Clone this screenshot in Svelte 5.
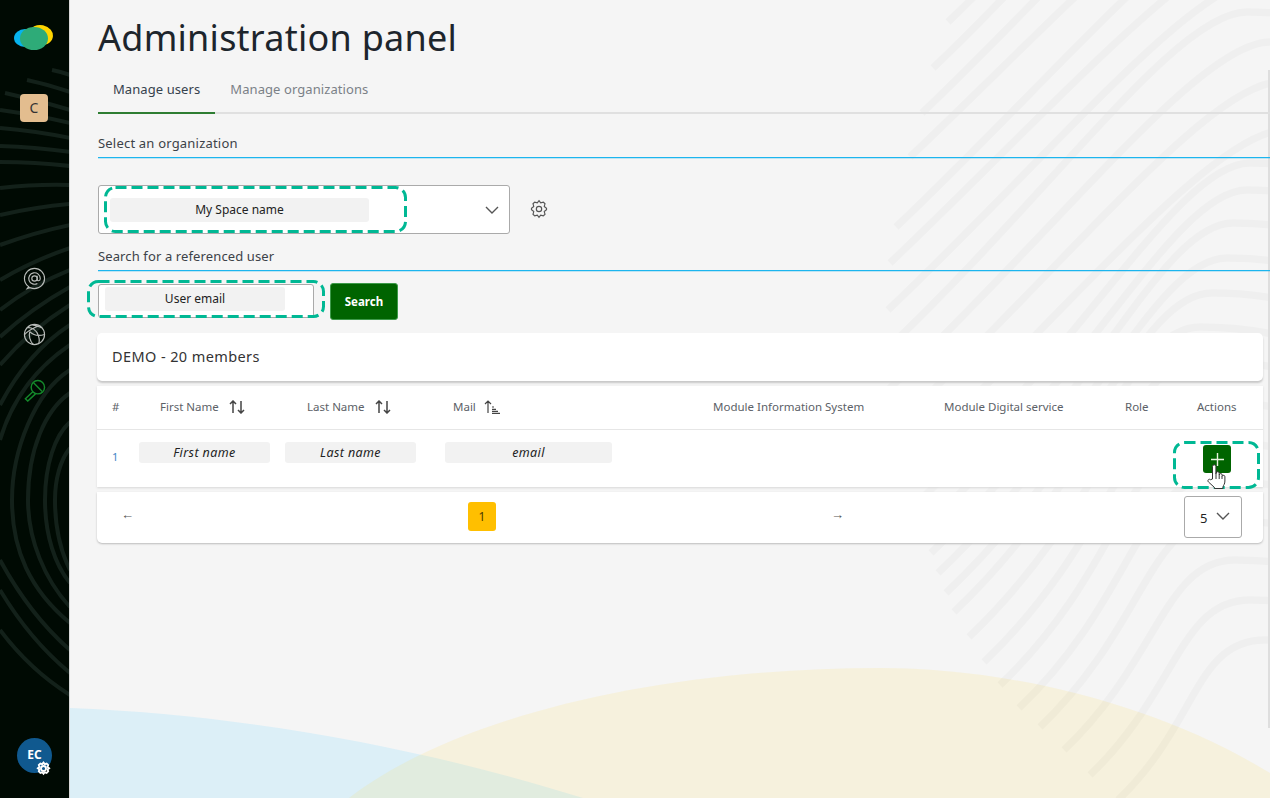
<script>
  const headers = [
    { label: "#", w: 48 },
    { label: "First Name", w: 147, sort: "both" },
    { label: "Last Name", w: 146, sort: "both" },
    { label: "Mail", w: 260, sort: "asc" },
    { label: "Module Information System", w: 231 },
    { label: "Module Digital service", w: 181 },
    { label: "Role", w: 72 },
    { label: "Actions" },
  ];

  // fingerprint ridges behind the page: [end x, end y, peak x, peak y]
  const ridges = [
    [948, 22, 1270, -300], [933, 68, 1270, -240], [922, 113, 1270, -190],
    [910, 157, 1270, -140], [896, 227, 1270, -100], [890, 263, 1270, -60],
    [888, 310, 1265, -22], [886, 350, 1247, 12], [888, 390, 1270, 42],
    [892, 430, 1280, 82], [900, 470, 1285, 130], [910, 510, 1250, 163],
    [920, 533, 1247, 190], [931, 553, 1233, 223], [938, 573, 1227, 258],
    [946, 593, 1212, 293], [954, 612, 1200, 327], [969, 637, 1200, 360],
    [984, 662, 1200, 400], [1000, 685, 1200, 440], [1019, 708, 1210, 480],
    [1040, 727, 1220, 520], [1064, 750, 1235, 560], [1090, 775, 1250, 600],
    [1118, 800, 1265, 640],
  ].map(([ex, ey, px, py]) => {
    const t = (ey - py) * 0.5;
    return `M${ex} ${ey}C${ex + t} ${ey - 0.95 * t} ${px - 70} ${py} ${px} ${py}C${px + 80} ${py} ${px + 150} ${py + 25} ${px + 200} ${py + 60}`;
  });

  const sideLines = [
    "M52 70Q62 72 70 75", "M27 80Q50 85 70 92", "M5 93Q38 100 70 110",
    "M0 110Q36 115 70 123", "M0 128Q36 131 70 138", "M0 146Q36 147 70 152",
    "M0 162Q36 162 70 166", "M0 188Q36 184 70 185", "M0 215Q36 207 70 204",
    "M0 245Q36 232 70 225", "M0 280Q34 260 70 248", "M0 310Q32 285 70 270",
    "M0 337Q32 308 70 287", "M0 365Q30 330 70 305", "M0 405Q28 352 70 325",
    "M0 440Q18 380 70 345",
    "M70 370C35 392 12 450 12 500C12 550 30 590 70 623",
    "M70 393C45 410 28 450 28 500C28 540 45 580 70 607",
    "M70 422C55 435 45 465 45 500C45 535 55 565 70 583",
    "M70 448C60 460 55 480 55 500C55 525 60 550 70 570",
    "M0 560Q30 615 70 650", "M0 590Q30 640 70 673", "M0 630Q30 670 70 695",
  ];
</script>

<div class="page">
  <aside class="sidebar">
    <svg class="side-bg" viewBox="0 0 69 798" aria-hidden="true">
      {#each sideLines as d}
        <path {d} />
      {/each}
    </svg>

    <svg class="logo" viewBox="0 0 40 28" aria-hidden="true">
      <ellipse cx="11" cy="15" rx="11" ry="9" fill="#06b3ee" />
      <ellipse cx="27" cy="12" rx="12" ry="10" fill="#ffd500" transform="rotate(12 27 12)" />
      <ellipse cx="20" cy="15.5" rx="14" ry="11.5" fill="#2eab78" />
    </svg>

    <div class="badge">C</div>

    <nav class="side-icons">
      <svg viewBox="0 0 24 24" aria-hidden="true">
        <path d="M6 20.500C3 18.500 1.500 15.500 1.500 12A10.500 10.500 0 1 1 12 22.500C10 22.500 8.500 22 7 21.500L4.500 22.500Z" />
        <circle cx="12" cy="12" r="2.800" />
        <path d="M14.800 9V13C14.800 15 18 15 18 12A6 6 0 1 0 15 17.200" />
      </svg>
      <svg viewBox="0 0 24 24" aria-hidden="true">
        <circle cx="12" cy="12" r="10.500" />
        <path d="M4 5C9 4 14 7 16 13S17 20 16 22M2 12C5 8 10 6 16 3M7 9C6 13 7 19 11 22.500M7 9C11 13 16 14 22.500 12M20 5C17 4 14 2.500 10 2" />
      </svg>
      <svg class="key" viewBox="0 0 24 24" aria-hidden="true">
        <circle cx="15.500" cy="8.500" r="7" />
        <path d="M11 4L20 13M10.500 13L2.500 20.500L5 23L13 15.500" />
      </svg>
    </nav>

    <div class="avatar">
      EC
      <svg class="avatar-gear" viewBox="0 0 24 24" aria-hidden="true">
        <circle cx="12" cy="12" r="4" />
        <path d="M12 2.500l2 2.500 3-1 2.500 2.500-1 3 2.500 2-2.500 2 1 3-2.500 2.500-3-1-2 2.500-2-2.500-3 1-2.500-2.500 1-3-2.500-2 2.500-2-1-3L7 4l3 1z" />
      </svg>
    </div>
  </aside>

  <main class="main">
    <svg class="main-bg" viewBox="70 0 1200 798" aria-hidden="true">
      <path class="blue" d="M70 798V708C250 715 430 750 583 798Z" />
      <path class="yellow" d="M349 798C450 720 650 668 881 668C1000 668 1150 700 1270 773V798Z" />
      {#each ridges as d}
        <path class="ridge" {d} />
      {/each}
    </svg>
    <div class="scrollbar"></div>

    <div class="content">
      <h1>Administration panel</h1>

      <div class="tabs">
        <span class="tab active">Manage users</span>
        <span class="tab">Manage organizations</span>
      </div>

      <h2 class="section first">Select an organization</h2>

      <div class="org-row">
        <div class="select">
          <span class="ph org-ph">My Space name</span>
          <svg class="dash org-dash" aria-hidden="true"><rect x="1.500" y="1.500" rx="10" /></svg>
          <svg class="chevron" viewBox="0 0 14 8" aria-hidden="true"><path d="M1 1l6 6 6-6" /></svg>
        </div>
        <svg class="gear" viewBox="0 0 24 24" aria-hidden="true">
          <circle cx="12" cy="12" r="3.200" />
          <path d="M12 2l2 2.600 3.200-.9 2 2-.9 3.200L21 11v2l-2.700 2.100.9 3.200-2 2-3.200-.9L12 22l-2-2.600-3.200.9-2-2 .9-3.200L3 13v-2l2.700-2.100-.9-3.200 2-2 3.200.9z" />
        </svg>
      </div>

      <h2 class="section second">Search for a referenced user</h2>

      <div class="search-row">
        <div class="input">
          <span class="ph email-ph">User email</span>
          <svg class="dash email-dash" aria-hidden="true"><rect x="1.500" y="1.500" rx="10" /></svg>
        </div>
        <button class="search">Search</button>
      </div>

      <section class="card title-card">DEMO - 20 members</section>

      <section class="card table-card">
        <div class="thead">
          {#each headers as h}
            <div class="th" style={h.w ? `width:${h.w}px` : ""}>
              {h.label}
              {#if h.sort === "both"}
                <svg class="sort" viewBox="0 0 16 14" aria-hidden="true"><path d="M4 13V1M1 4l3-3 3 3M12 1v12M9 10l3 3 3-3" /></svg>
              {:else if h.sort === "asc"}
                <svg class="sort mail-sort" viewBox="0 0 16 14" aria-hidden="true"><path d="M4 13V1M1 4l3-3 3 3M8 7h2M8 9.300h4M8 11.300h6M8 13.300h8" /></svg>
              {/if}
            </div>
          {/each}
        </div>
        <div class="tr">
          <span class="num">1</span>
          <span class="ph cell first-cell">First name</span>
          <span class="ph cell last-cell">Last name</span>
          <span class="ph cell mail-cell">email</span>
          <div class="action">
            <button class="add" aria-label="Add">
              <svg viewBox="0 0 14 14" aria-hidden="true"><path d="M7 0v14M0 7h14" /></svg>
            </button>
            <svg class="dash add-dash" aria-hidden="true"><rect x="1.500" y="1.500" rx="10" /></svg>
            <svg class="hand" viewBox="0 0 20 27" aria-hidden="true">
              <path d="M6.500 16V3.500a1.700 1.700 0 0 1 3.400 0V11l.3-1a1.500 1.500 0 0 1 3 .4V12a1.500 1.500 0 0 1 3 .2v1a1.400 1.400 0 0 1 2.700.5v4.300c0 3-1.300 4-2 6v1.500H8.500V24.500L2.500 19c-1.500-1.500.3-3.700 2-2.300z" />
              <path d="M10 11v5M13.200 12v4M16 13v3" />
            </svg>
          </div>
        </div>
      </section>

      <section class="card pager">
        <span class="arrow prev">←</span>
        <span class="page-num">1</span>
        <span class="arrow next">→</span>
        <div class="per-page">
          5
          <svg viewBox="0 0 14 8" aria-hidden="true"><path d="M1 1l6 6 6-6" /></svg>
        </div>
      </section>
    </div>
  </main>
</div>

<style>
  :global(body) {
    margin: 0;
  }

  .page {
    display: flex;
    width: 1270px;
    height: 798px;
    overflow: hidden;
    font-family: "Noto Sans", sans-serif;
    color: #2b333b;
    background: #f5f5f5;
  }

  .sidebar {
    position: relative;
    flex: 0 0 69px;
    display: flex;
    flex-direction: column;
    align-items: center;
    background: #000a03;
    border-right: 1px solid #d8d8d8;
  }

  .side-bg {
    position: absolute;
    left: 0;
    top: 0;
    width: 69px;
    height: 798px;
    fill: none;
    stroke: #13211a;
    stroke-width: 4;
  }

  .logo {
    position: relative;
    width: 40px;
    height: 28px;
    margin: 23px 2px 0 0;
  }

  .badge {
    position: relative;
    width: 28px;
    height: 28px;
    margin: 43px 1px 0 0;
    border-radius: 4px;
    background: #e3bd8f;
    color: #333;
    font-size: 14px;
    line-height: 28px;
    text-align: center;
  }

  .side-icons {
    position: relative;
    display: flex;
    flex-direction: column;
    gap: 33px;
    margin-top: 145px;
  }

  .side-icons svg {
    display: block;
    width: 23px;
    height: 23px;
    fill: none;
    stroke: #b9bdba;
    stroke-width: 1.200;
  }

  .side-icons .key {
    stroke: #14882b;
    stroke-width: 1.500;
  }

  .avatar {
    position: relative;
    width: 35px;
    height: 35px;
    margin-top: auto;
    margin-bottom: 25px;
    border-radius: 50%;
    background: #10598f;
    color: #fff;
    font-size: 12px;
    font-weight: 700;
    line-height: 33px;
    text-align: center;
  }

  .avatar-gear {
    position: absolute;
    right: 1px;
    bottom: -3px;
    width: 15px;
    height: 15px;
    fill: none;
    stroke: #fff;
    stroke-width: 3;
  }

  .main {
    position: relative;
    flex: 1;
    min-width: 0;
  }

  .main-bg {
    position: absolute;
    left: 0;
    top: 0;
    width: 1200px;
    height: 798px;
  }

  .blue {
    fill: #dceff7;
  }

  .yellow {
    fill: rgba(252, 222, 78, 0.14);
  }

  .ridge {
    fill: none;
    stroke: rgba(0, 0, 0, 0.025);
    stroke-width: 7.500;
  }

  .scrollbar {
    position: absolute;
    right: 0;
    top: 70px;
    width: 2px;
    height: 658px;
    background: #dedede;
  }

  .content {
    position: relative;
    padding-left: 28px;
  }

  h1 {
    margin: 0;
    padding-top: 13px;
    font-size: 36px;
    font-weight: 400;
    line-height: 50px;
    color: #1d252c;
    letter-spacing: 0.25px;
  }

  .tabs {
    display: flex;
    height: 37px;
    margin-top: 12px;
    border-bottom: 2px solid #e0e0e0;
  }

  .tab {
    padding: 5px 15px 0;
    font-size: 13px;
    line-height: 18px;
    letter-spacing: 0.08px;
    color: #7b8187;
  }

  .tab.active {
    margin-bottom: -2px;
    border-bottom: 2px solid #2e7d32;
    color: #36424d;
  }

  .section {
    margin: 0;
    padding-bottom: 5px;
    border-bottom: 1px solid #1cb5ee;
    box-shadow: 0 1px 0 rgba(31, 180, 234, 0.25);
    font-size: 13px;
    font-weight: 400;
    line-height: 18px;
    color: #3c4248;
  }

  .section.first {
    margin-top: 20px;
    letter-spacing: 0.2px;
  }

  .section.second {
    letter-spacing: 0.12px;
  }

  .org-row {
    display: flex;
    align-items: center;
    gap: 19px;
    margin: 27px 0 13px;
  }

  .select {
    position: relative;
    box-sizing: border-box;
    width: 412px;
    height: 49px;
    border: 1px solid #aaa;
    border-radius: 3px;
    background: #fff;
  }

  .ph {
    display: block;
    border-radius: 3px;
    background: #f2f2f2;
    color: #222;
    font-size: 12px;
    text-align: center;
  }

  .org-ph {
    position: absolute;
    left: 11px;
    top: 12px;
    width: 259px;
    line-height: 24px;
  }

  .dash {
    position: absolute;
    pointer-events: none;
  }

  .dash rect {
    width: calc(100% - 3px);
    height: calc(100% - 3px);
    fill: none;
    stroke: #00b894;
    stroke-width: 3;
    stroke-dasharray: 11 5;
  }

  .org-dash {
    left: 5px;
    top: 0;
    width: 303px;
    height: 47px;
  }

  .chevron {
    position: absolute;
    right: 10px;
    top: 20px;
    width: 14px;
    height: 8px;
    fill: none;
    stroke: #555;
    stroke-width: 1.400;
  }

  .gear {
    width: 20px;
    height: 20px;
    margin-top: -2px;
    fill: none;
    stroke: #555;
    stroke-width: 1.400;
  }

  .search-row {
    display: flex;
    align-items: flex-start;
    gap: 16px;
    margin-top: 12px;
  }

  .input {
    position: relative;
    box-sizing: border-box;
    width: 216px;
    height: 34px;
    margin-top: 1px;
    border: 1px solid #aaa;
    border-radius: 3px;
    background: #fff;
  }

  .email-ph {
    position: absolute;
    left: 6px;
    top: 2px;
    width: 180px;
    line-height: 24px;
  }

  .email-dash {
    left: -12px;
    top: -5px;
    width: 238px;
    height: 38px;
  }

  .search {
    width: 68px;
    height: 37px;
    padding: 0;
    border: 1px solid #3d9a4a;
    border-radius: 3px;
    background: #006400;
    color: #fff;
    font-family: inherit;
    font-size: 11.500px;
    font-weight: 700;
  }

  .card {
    width: 1166px;
    margin-left: -1px;
    border-radius: 5px;
    background: #fff;
  }

  .title-card {
    box-sizing: border-box;
    height: 48px;
    margin-top: 13px;
    padding: 13px 15px;
    box-shadow: 0 2px 2px #c8c8c8;
    font-size: 14.500px;
    line-height: 20px;
    letter-spacing: 0.4px;
    color: #333;
  }

  .table-card {
    height: 101px;
    margin-top: 5px;
    box-shadow: 0 1px 2px #d8d8d8;
    border-radius: 0;
  }

  .thead {
    display: flex;
    align-items: center;
    box-sizing: border-box;
    height: 44px;
    padding: 0 0 2px 15px;
    border-bottom: 1px solid #e6e6e6;
  }

  .th {
    display: flex;
    align-items: center;
    gap: 10px;
    font-size: 11.500px;
    color: #5c6167;
    white-space: nowrap;
  }

  .sort {
    width: 16px;
    height: 14px;
    fill: none;
    stroke: #444;
    stroke-width: 1.500;
  }

  .mail-sort {
    margin-left: -2px;
    stroke-width: 1.200;
  }

  .tr {
    display: flex;
    align-items: flex-start;
    padding: 12px 0 0 15px;
  }

  .num {
    width: 27px;
    padding-top: 7px;
    font-size: 11px;
    line-height: 16px;
    color: #3f86c6;
  }

  .cell {
    height: 21px;
    font-size: 12.500px;
    font-style: italic;
    line-height: 21px;
    letter-spacing: 0.4px;
  }

  .first-cell,
  .last-cell {
    width: 131px;
    margin-right: 15px;
  }

  .last-cell {
    margin-right: 29px;
  }

  .mail-cell {
    width: 167px;
  }

  .action {
    position: relative;
    margin-left: 591px;
    margin-top: 3px;
  }

  .add {
    display: flex;
    align-items: center;
    justify-content: center;
    width: 28px;
    height: 28px;
    padding: 0;
    border: 0;
    border-radius: 3px;
    background: #006400;
  }

  .add svg {
    width: 13px;
    height: 13px;
    fill: none;
    stroke: #e8f3e0;
    stroke-width: 1.500;
  }

  .add-dash {
    left: -30px;
    top: -4px;
    width: 87px;
    height: 48px;
  }

  .hand {
    position: absolute;
    left: 3px;
    top: 18px;
    width: 20px;
    height: 27px;
    fill: #fff;
    stroke: #333;
    stroke-width: 1;
  }

  .pager {
    display: flex;
    align-items: center;
    box-sizing: border-box;
    position: relative;
    height: 51px;
    margin-top: 5px;
    padding-bottom: 2px;
    box-shadow: 0 1px 2px #bbb;
    border-radius: 0 0 5px 5px;
  }

  .arrow {
    position: absolute;
    font-size: 13px;
    color: #555;
    line-height: 16px;
  }

  .prev {
    left: 24px;
    top: 14px;
  }

  .next {
    left: 734px;
    top: 14px;
  }

  .page-num {
    width: 28px;
    height: 29px;
    margin-left: 371px;
    border-radius: 3px;
    background: #ffbf00;
    font-size: 12px;
    line-height: 29px;
    text-align: center;
    color: #4a3a00;
  }

  .per-page {
    display: flex;
    align-items: center;
    justify-content: space-between;
    box-sizing: border-box;
    width: 58px;
    height: 42px;
    margin-left: auto;
    margin-right: 21px;
    padding: 2px 11px 0 15px;
    border: 1px solid #aaa;
    border-radius: 3px;
    font-size: 13px;
    color: #222;
  }

  .per-page svg {
    width: 14px;
    height: 8px;
    margin-top: -3px;
    fill: none;
    stroke: #555;
    stroke-width: 1.400;
  }
</style>
